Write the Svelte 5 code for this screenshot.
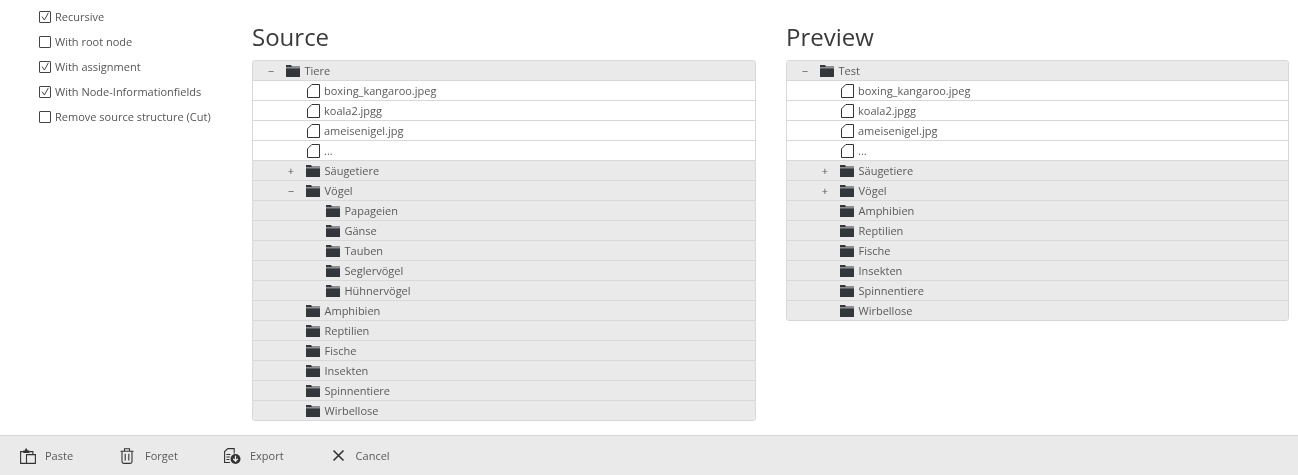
<script>
  const options = [
    { label: "Recursive", checked: true },
    { label: "With root node", checked: false },
    { label: "With assignment", checked: true },
    { label: "With Node-Informationfields", checked: true },
    { label: "Remove source structure (Cut)", checked: false }
  ];

  const files = ["boxing_kangaroo.jpeg", "koala2.jpgg", "ameisenigel.jpg", "..."];
  const birds = ["Papageien", "Gänse", "Tauben", "Seglervögel", "Hühnervögel"];
  const rest = ["Amphibien", "Reptilien", "Fische", "Insekten", "Spinnentiere", "Wirbellose"];

  const row = (label, depth, type = "folder", toggle = "") => ({ label, depth, type, toggle });
  const fileRows = files.map((f) => row(f, 1, "file"));
  const restRows = rest.map((f) => row(f, 1));

  const source = [
    row("Tiere", 0, "folder", "−"),
    ...fileRows,
    row("Säugetiere", 1, "folder", "+"),
    row("Vögel", 1, "folder", "−"),
    ...birds.map((b) => row(b, 2)),
    ...restRows
  ];
  const preview = [
    row("Test", 0, "folder", "−"),
    ...fileRows,
    row("Säugetiere", 1, "folder", "+"),
    row("Vögel", 1, "folder", "+"),
    ...restRows
  ];
  const trees = [
    { title: "Source", rows: source },
    { title: "Preview", rows: preview }
  ];
</script>

<div class="page">
  <main class="content">
    <ul class="options">
      {#each options as o}
        <li>
          <span class="box">
            {#if o.checked}
              <svg viewBox="0 0 10 10" width="10" height="10"><path d="M2 4.6 4.4 8 8.4 .8" fill="none" stroke="#444" stroke-width="1" /></svg>
            {/if}
          </span>
          {o.label}
        </li>
      {/each}
    </ul>

    {#each trees as t}
      <section class="pane">
        <h2>{t.title}</h2>
        <div class="tree">
          {#each t.rows as r}
            <div class="row" class:file={r.type === "file"} style="padding-left: {r.depth * 20}px">
              <span class="toggle">{r.toggle}</span>
              {#if r.type === "folder"}
                <svg class="icon" viewBox="0 0 14 12" width="14" height="12">
                  <path d="M0 0h5l1 1.6h8v1H0z M0 3.2h14V12H0z" fill="#33363a" />
                </svg>
              {:else}
                <svg class="icon doc" viewBox="0 0 13 14" width="13" height="14">
                  <path d="M.5 4.8 4.8.5h7.7v13H.5z" fill="#fff" stroke="#333" stroke-width="1" />
                </svg>
              {/if}
              <span class="label">{r.label}</span>
            </div>
          {/each}
        </div>
      </section>
    {/each}
  </main>

  <footer class="toolbar">
    <button class="paste">
      <svg viewBox="0 0 16 16" width="16" height="16" fill="none" stroke="#333" stroke-width="1.1">
        <path d="M6 15.4H.6V3.6h3M9.5 3.6h3.4v3" />
        <path d="M6.5 6.6h8.9v8.8H6.5z" />
        <path d="M3.2 5V2.6h1.6L5.6.6h1.2l.8 2H9.6V5z" fill="#333" stroke="none" />
      </svg>
      Paste
    </button>
    <button class="forget">
      <svg viewBox="0 0 14 16" width="14" height="16" fill="none" stroke="#333" stroke-width="1.1">
        <path d="M.5 3.2h13M4.5 3V.8h5V3M2 3.2v10.4q0 1.8 1.8 1.8h6.4q1.8 0 1.8-1.8V3.2M5.2 5.8v6.8M8.8 5.8v6.8" />
      </svg>
      Forget
    </button>
    <button class="export">
      <svg viewBox="0 0 17 16" width="17" height="16" fill="none" stroke="#333" stroke-width="1.1">
        <path d="M6 14.5H.6V3.6L3.8.6h6.4v5" />
        <path d="M2.4 6.5h4M2.4 9h3.4M2.4 11.5h3" />
        <circle cx="11.5" cy="11" r="5" fill="#333" stroke="none" />
        <path d="M11.5 7.8v5M9.3 10.8l2.2 2.4 2.2-2.4" stroke="#eaeaea" stroke-width="1.3" />
      </svg>
      Export
    </button>
    <button class="cancel">
      <svg viewBox="0 0 13 13" width="13" height="13" fill="none" stroke="#333" stroke-width="1.6">
        <path d="M1.5 1.5 11.5 11.5M11.5 1.5 1.5 11.5" />
      </svg>
      Cancel
    </button>
  </footer>
</div>

<style>
  :global(body) {
    font-family: "Open Sans", sans-serif;
    color: #5a5a5a;
    background: #fff;
  }

  .page {
    height: 475px;
    display: flex;
    flex-direction: column;
    overflow: hidden;
    will-change: transform;
  }

  .content {
    flex: 1;
    display: flex;
    min-height: 0;
  }
  .options {
    list-style: none;
    width: 252px;
    flex: none;
    box-sizing: border-box;
    margin: 0;
    padding: 4px 0 0 39px;
    font-size: 11px;
    color: #555;
  }
  .options li {
    height: 25px;
    display: flex;
    align-items: center;
    gap: 4px;
    white-space: nowrap;
  }
  .box {
    width: 10px;
    height: 10px;
    margin-top: 1px;
    border: 1px solid #444;
    border-radius: 1px;
    flex: none;
    display: block;
  }
  .box svg { display: block; }

  .pane { width: 504px; flex: none; }
  .pane:last-child { width: 503px; margin-left: 30px; }

  h2 {
    margin: 0;
    padding-top: 20px;
    height: 40px;
    font-size: 24px;
    line-height: 34px;
    font-weight: 400;
    color: #3a3a3a;
  }

  .tree {
    border: 1px solid #d8d8d8;
    border-radius: 3px;
    overflow: hidden;
    background: #eaeaea;
  }
  .row {
    height: 19px;
    display: flex;
    align-items: center;
    font-size: 11px;
    border-bottom: 1px solid #d8d8d8;
    background: #eaeaea;
    color: #5a5a5a;
  }
  .row:last-child { border-bottom: none; }
  .row.file { background: #fff; }

  .toggle {
    width: 33px;
    text-align: right;
    padding-right: 12px;
    box-sizing: border-box;
    flex: none;
    font-size: 11px;
    color: #555;
  }
  .icon { flex: none; display: block; }
  .doc { margin-left: 1px; margin-right: -.5px; }
  .label { margin-left: 4.5px; white-space: nowrap; }

  .toolbar {
    height: 39px;
    flex: none;
    background: #eaeaea;
    border-top: 1px solid #d8d8d8;
    display: flex;
    align-items: center;
  }
  .toolbar button {
    all: unset;
    display: flex;
    align-items: center;
    font-size: 11px;
    color: #5a5a5a;
  }
  .toolbar svg { display: block; }
  .toolbar .paste { margin-left: 20px; gap: 9px; }
  .toolbar .forget { margin-left: 47px; gap: 11px; }
  .toolbar .export { margin-left: 46px; gap: 9px; }
  .toolbar .cancel { margin-left: 48px; gap: 11px; }
</style>
